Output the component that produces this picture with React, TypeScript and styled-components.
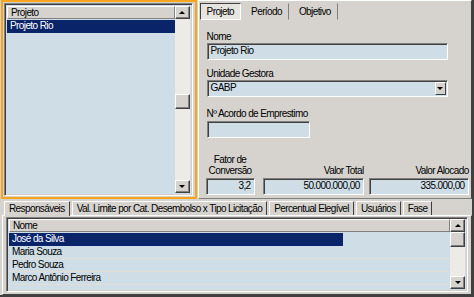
import React from 'react';
import styled, { createGlobalStyle } from 'styled-components';

const projetos = ['Projeto Rio'];
const responsaveis = ['José da Silva', 'Maria Souza', 'Pedro Souza', 'Marco Antônio Ferreira'];
const topTabs = ['Projeto', 'Período', 'Objetivo'];
const bottomTabs = [
  'Responsáveis',
  'Val. Limite por Cat. Desembolso x Tipo Licitação',
  'Percentual Elegível',
  'Usuários',
  'Fase',
];

const App: React.FC = () => {
  return (
    <Window>
      <GlobalStyle />
      <TopArea>
        <ProjectPanel>
          <ListBox>
            <ListBody>
              <ColumnHeader>Projeto</ColumnHeader>
              {projetos.map((p, i) => (
                <ListRow key={p} selected={i === 0}>
                  {p}
                </ListRow>
              ))}
            </ListBody>
            <ScrollBar>
              <ScrollButton>
                <Arrow up />
              </ScrollButton>
              <ScrollTrack thumbTop={75} />
              <ScrollButton>
                <Arrow />
              </ScrollButton>
            </ScrollBar>
          </ListBox>
        </ProjectPanel>

        <DetailPanel>
          <ButtonTabs>
            {topTabs.map((t, i) => (
              <ButtonTab key={t} active={i === 0}>
                {t}
              </ButtonTab>
            ))}
          </ButtonTabs>
          <Form>
            <Field>
              <Label>Nome</Label>
              <TextBox>Projeto Rio</TextBox>
            </Field>
            <Field>
              <Label>Unidade Gestora</Label>
              <TextBox>
                GABP
                <ComboButton>
                  <Arrow />
                </ComboButton>
              </TextBox>
            </Field>
            <Field gap="2px" offset="3px">
              <Label>Nº Acordo de Emprestimo</Label>
              <TextBox width="103px" />
            </Field>
            <NumberRow>
              <NumberField width="49px">
                <Label align="center">
                  Fator de
                  <br />
                  Conversão
                </Label>
                <TextBox align="right">3,2</TextBox>
              </NumberField>
              <NumberField width="101px" gapLeft="8px">
                <Label align="right">Valor Total</Label>
                <TextBox align="right">50.000.000,00</TextBox>
              </NumberField>
              <NumberField width="100px" gapLeft="5px">
                <Label align="right">Valor Alocado</Label>
                <TextBox align="right">335.000,00</TextBox>
              </NumberField>
            </NumberRow>
          </Form>
        </DetailPanel>
      </TopArea>

      <BottomArea>
        <Tabs>
          {bottomTabs.map((t, i) => (
            <Tab key={t} active={i === 0}>
              {t}
            </Tab>
          ))}
        </Tabs>
        <TabPanel>
          <ListBox compact>
            <ListBody>
              <ColumnHeader>Nome</ColumnHeader>
              {responsaveis.map((r, i) => (
                <ListRow key={r} selected={i === 0} width="334px" lined>
                  {r}
                </ListRow>
              ))}
            </ListBody>
            <ScrollBar>
              <ScrollButton>
                <Arrow up />
              </ScrollButton>
              <ScrollTrack thumbTop={0} />
              <ScrollButton>
                <Arrow />
              </ScrollButton>
            </ScrollBar>
          </ListBox>
        </TabPanel>
      </BottomArea>
    </Window>
  );
};

export default App;

const GlobalStyle = createGlobalStyle`
  html, body {
    margin: 0;
    padding: 0;
    background: #d4d0c8;
  }
  * {
    box-sizing: border-box;
  }
`;

const Window = styled.div`
  width: 474px;
  height: 297px;
  background: #d6d3ce;
  border-right: 2px solid #404040;
  border-bottom: 2px solid #404040;
  display: flex;
  flex-direction: column;
  font-family: 'Liberation Sans', Arial, sans-serif;
  font-size: 10px;
  letter-spacing: -0.6px;
  color: #000;
  overflow: hidden;
`;

const TopArea = styled.div`
  display: flex;
  height: 199px;
  gap: 1px;
`;

const ProjectPanel = styled.div`
  width: 196px;
  margin-left: 1px;
  border: 2px solid #f7a51c;
  padding: 1px 2px 1px 1px;
  display: flex;
`;

const ListBox = styled.div<{ compact?: boolean }>`
  flex: 1;
  display: flex;
  border: 1px solid;
  border-color: #808080 #fff #fff #808080;
  box-shadow: inset 1px 1px 0 #404040, inset -1px -1px 0 #d4d0c8;
  padding: ${(p) => (p.compact ? '1px 2px 2px 2px' : '2px')};
  background: #cfdee6;
`;

const ListBody = styled.div`
  flex: 1;
  display: flex;
  flex-direction: column;
`;

const ColumnHeader = styled.div`
  height: 13px;
  line-height: 11px;
  padding-left: 3px;
  margin-bottom: 1px;
  background: #d6d3ce;
  border: 1px solid;
  border-color: #fff #808080 #808080 #fff;
`;

const ListRow = styled.div<{ selected?: boolean; width?: string; lined?: boolean }>`
  height: 13px;
  line-height: 12px;
  padding-left: 3px;
  white-space: nowrap;
  width: ${(p) => (p.selected && p.width ? p.width : 'auto')};
  background: ${(p) => (p.selected ? '#0a246a' : 'transparent')};
  color: ${(p) => (p.selected ? '#fff' : '#000')};
  border-bottom: 1px solid ${(p) => (p.lined && !p.selected ? '#e2ded6' : 'transparent')};
`;

const ScrollBar = styled.div`
  width: 15px;
  display: flex;
  flex-direction: column;
  background: #ecebe6;
`;

const ScrollButton = styled.div`
  height: 13px;
  display: flex;
  align-items: center;
  justify-content: center;
  background: #d6d3ce;
  border: 1px solid;
  border-color: #fff #404040 #404040 #fff;
  box-shadow: inset -1px -1px 0 #808080;
`;

const ScrollTrack = styled.div<{ thumbTop: number }>`
  flex: 1;
  position: relative;
  &::after {
    content: '';
    position: absolute;
    left: 0;
    right: 0;
    top: ${(p) => p.thumbTop}px;
    height: 13px;
    background: #d6d3ce;
    border: 1px solid;
    border-color: #fff #404040 #404040 #fff;
    box-shadow: inset -1px -1px 0 #808080;
  }
`;

const Arrow = styled.span<{ up?: boolean }>`
  width: 0;
  height: 0;
  border-left: 3px solid transparent;
  border-right: 3px solid transparent;
  ${(p) => (p.up ? 'border-bottom: 3px solid #000;' : 'border-top: 3px solid #000;')}
`;

const DetailPanel = styled.div`
  width: 275px;
  display: flex;
  flex-direction: column;
  border: 1px solid;
  border-color: #fff #404040 #808080 #fff;
  padding: 2px 0 0 1px;
`;

const ButtonTabs = styled.div`
  display: flex;
  height: 17px;
`;

const ButtonTab = styled.div<{ active?: boolean }>`
  padding: 0 6px;
  line-height: 15px;
  border: 1px solid;
  border-color: ${(p) =>
    p.active ? '#404040 #fff #fff #404040' : 'transparent #808080 transparent transparent'};
  background: ${(p) => (p.active ? '#e6e4df' : 'transparent')};
  margin-right: 3px;
`;

const Form = styled.div`
  flex: 1;
  display: flex;
  flex-direction: column;
  padding: 11px 2px 0 7px;
  gap: 8px;
`;

const Field = styled.div<{ gap?: string; offset?: string }>`
  display: flex;
  flex-direction: column;
  gap: ${(p) => p.gap || '1px'};
  margin-top: ${(p) => p.offset || '0'};
`;

const Label = styled.div<{ align?: string }>`
  line-height: 11px;
  text-align: ${(p) => p.align || 'left'};
  color: #000;
  white-space: nowrap;
`;

const TextBox = styled.div<{ width?: string; align?: string }>`
  position: relative;
  width: ${(p) => p.width || '241px'};
  height: 17px;
  line-height: 14px;
  padding: 0 3px;
  text-align: ${(p) => p.align || 'left'};
  background: #cfdee6;
  border: 1px solid;
  border-color: #808080 #fff #fff #808080;
  box-shadow: inset 1px 1px 0 #404040;
  white-space: nowrap;
`;

const ComboButton = styled.div`
  position: absolute;
  right: 1px;
  top: 1px;
  width: 11px;
  height: 13px;
  display: flex;
  align-items: center;
  justify-content: center;
  background: #d6d3ce;
  border: 1px solid;
  border-color: #fff #404040 #404040 #fff;
`;

const NumberRow = styled.div`
  display: flex;
  align-items: flex-end;
  margin-top: 8px;
  margin-left: -1px;
`;

const NumberField = styled.div<{ width: string; gapLeft?: string }>`
  width: ${(p) => p.width};
  margin-left: ${(p) => p.gapLeft || '0'};
  display: flex;
  flex-direction: column;
  gap: 2px;
  ${TextBox} {
    width: 100%;
  }
`;

const BottomArea = styled.div`
  flex: 1;
  display: flex;
  flex-direction: column;
  padding: 1px 0 0 2px;
`;

const Tabs = styled.div`
  display: flex;
  height: 15px;
  align-items: flex-end;
  padding-left: 2px;
`;

const Tab = styled.div<{ active?: boolean }>`
  height: ${(p) => (p.active ? '15px' : '14px')};
  line-height: 13px;
  padding: 0 4px;
  margin-right: 2px;
  white-space: nowrap;
  border: 1px solid;
  border-bottom: none;
  border-color: #fff #404040 transparent #fff;
  position: relative;
  z-index: ${(p) => (p.active ? 1 : 0)};
  margin-bottom: ${(p) => (p.active ? '-1px' : '0')};
  background: #d6d3ce;
`;

const TabPanel = styled.div`
  flex: 1;
  display: flex;
  border: 1px solid;
  border-color: #fff #404040 #404040 #fff;
  padding: 1px 3px 2px 3px;
`;
